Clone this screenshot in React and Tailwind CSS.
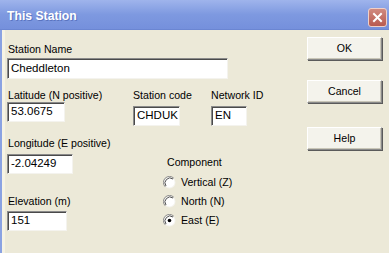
import React from "react";

function Field({ w, h = "h-[20px]", value }) {
  return (
    <div
      className={`${h} bg-white border border-t-[#8a8a8a] border-l-[#8a8a8a] border-b-[#f4f3ee] border-r-[#f4f3ee] shadow-[inset_1px_1px_0_#4a4a4a] pl-[3px] flex items-center text-black`}
      style={{ width: w }}
    >
      <span className="text-[11.5px] leading-none">{value}</span>
    </div>
  );
}

function Radio({ checked, label }) {
  return (
    <div className="flex items-center h-[19px]">
      <svg width="13" height="13" viewBox="0 0 13 13" className="shrink-0">
        <circle cx="6.5" cy="6.5" r="6" fill="#f4f3ee" />
        <circle cx="6.5" cy="6.5" r="5" fill="#ffffff" />
        <path d="M2.2 10.8 A6 6 0 0 1 10.8 2.2" fill="none" stroke="#8a8a8a" strokeWidth="1" />
        <path d="M3 10 A5 5 0 0 1 10 3" fill="none" stroke="#505050" strokeWidth="1" />
        {checked && <circle cx="6.5" cy="6.5" r="1.8" fill="#000" />}
      </svg>
      <span className="ml-[5px]">{label}</span>
    </div>
  );
}

function Btn({ children }) {
  return (
    <div className="w-[75px] h-[23px] flex items-center justify-center bg-[#f4f3ec] border border-t-[#ffffff] border-l-[#ffffff] border-b-[#8a8a8a] border-r-[#8a8a8a] shadow-[inset_-1px_-1px_0_#c9c6b8,1px_1px_0_#5a5a5a] text-black">
      {children}
    </div>
  );
}

export default function App() {
  return (
    <div
      className="w-[389px] h-[253px] flex flex-col bg-[#ece9d8] overflow-hidden text-[10.6px] leading-[13px] text-black"
      style={{ fontFamily: '"Liberation Sans", Arial, sans-serif' }}
    >
      {/* title bar */}
      <div className="h-[30px] shrink-0 flex items-center justify-between pl-[7px] pr-[2px] bg-gradient-to-b from-[#9fb4ec] via-[#7e99e0] to-[#7590dc] border-b border-[#6b86d2]">
        <span className="text-white font-bold text-[12.2px] mt-[3px] [text-shadow:1px_1px_0_#5a74c0]">
          This Station
        </span>
        <div className="w-[19px] h-[19px] mt-[5px] rounded-[3px] bg-gradient-to-b from-[#d08a80] to-[#b85a50] border border-[#f0d0c8] flex items-center justify-center">
          <svg width="11" height="11" viewBox="0 0 11 11">
            <path d="M2 2 L9 9 M9 2 L2 9" stroke="#fff" strokeWidth="2" strokeLinecap="square" />
          </svg>
        </div>
      </div>

      {/* body */}
      <div className="flex-1 flex border-l-2 border-[#8aa2e2]">
        <div className="w-[3px] bg-[#f6f3e4]" />
        <div className="flex-1 flex pl-[2px]">
          {/* form */}
          <div className="w-[300px] flex flex-col">
            <div className="mt-[13px] pl-px">Station Name</div>
            <div className="mt-[2px]">
              <Field w={221} h="h-[21px]" value="Cheddleton" />
            </div>

            <div className="flex mt-[10px]">
              <div className="w-[126px] flex flex-col">
                <div className="pl-px">Latitude (N positive)</div>
                <div className="mt-0">
                  <Field w={58} value="53.0675" />
                </div>
              </div>
              <div className="w-[78px] flex flex-col">
                <div>Station code</div>
                <div className="mt-[4px]">
                  <Field w={47} value="CHDUK" />
                </div>
              </div>
              <div className="flex flex-col">
                <div>Network ID</div>
                <div className="mt-[4px]">
                  <Field w={36} value="EN" />
                </div>
              </div>
            </div>

            <div className="flex mt-[11px]">
              <div className="w-[156px] flex flex-col">
                <div className="pl-px">Longitude (E positive)</div>
                <div className="mt-[4px]">
                  <Field w={66} value="-2.04249" />
                </div>
                <div className="mt-[21px] pl-px">Elevation (m)</div>
                <div className="mt-[3px]">
                  <Field w={60} value="151" />
                </div>
              </div>
              <div className="flex flex-col mt-[19px]">
                <div className="pl-[4px] mb-[4px]">Component</div>
                <Radio label="Vertical (Z)" />
                <Radio label="North (N)" />
                <Radio checked label="East (E)" />
              </div>
            </div>
          </div>

          {/* buttons */}
          <div className="flex flex-col pt-[7px]">
            <Btn>OK</Btn>
            <div className="mt-[20px]">
              <Btn>Cancel</Btn>
            </div>
            <div className="mt-[24px]">
              <Btn>Help</Btn>
            </div>
          </div>
        </div>
      </div>
    </div>
  );
}
